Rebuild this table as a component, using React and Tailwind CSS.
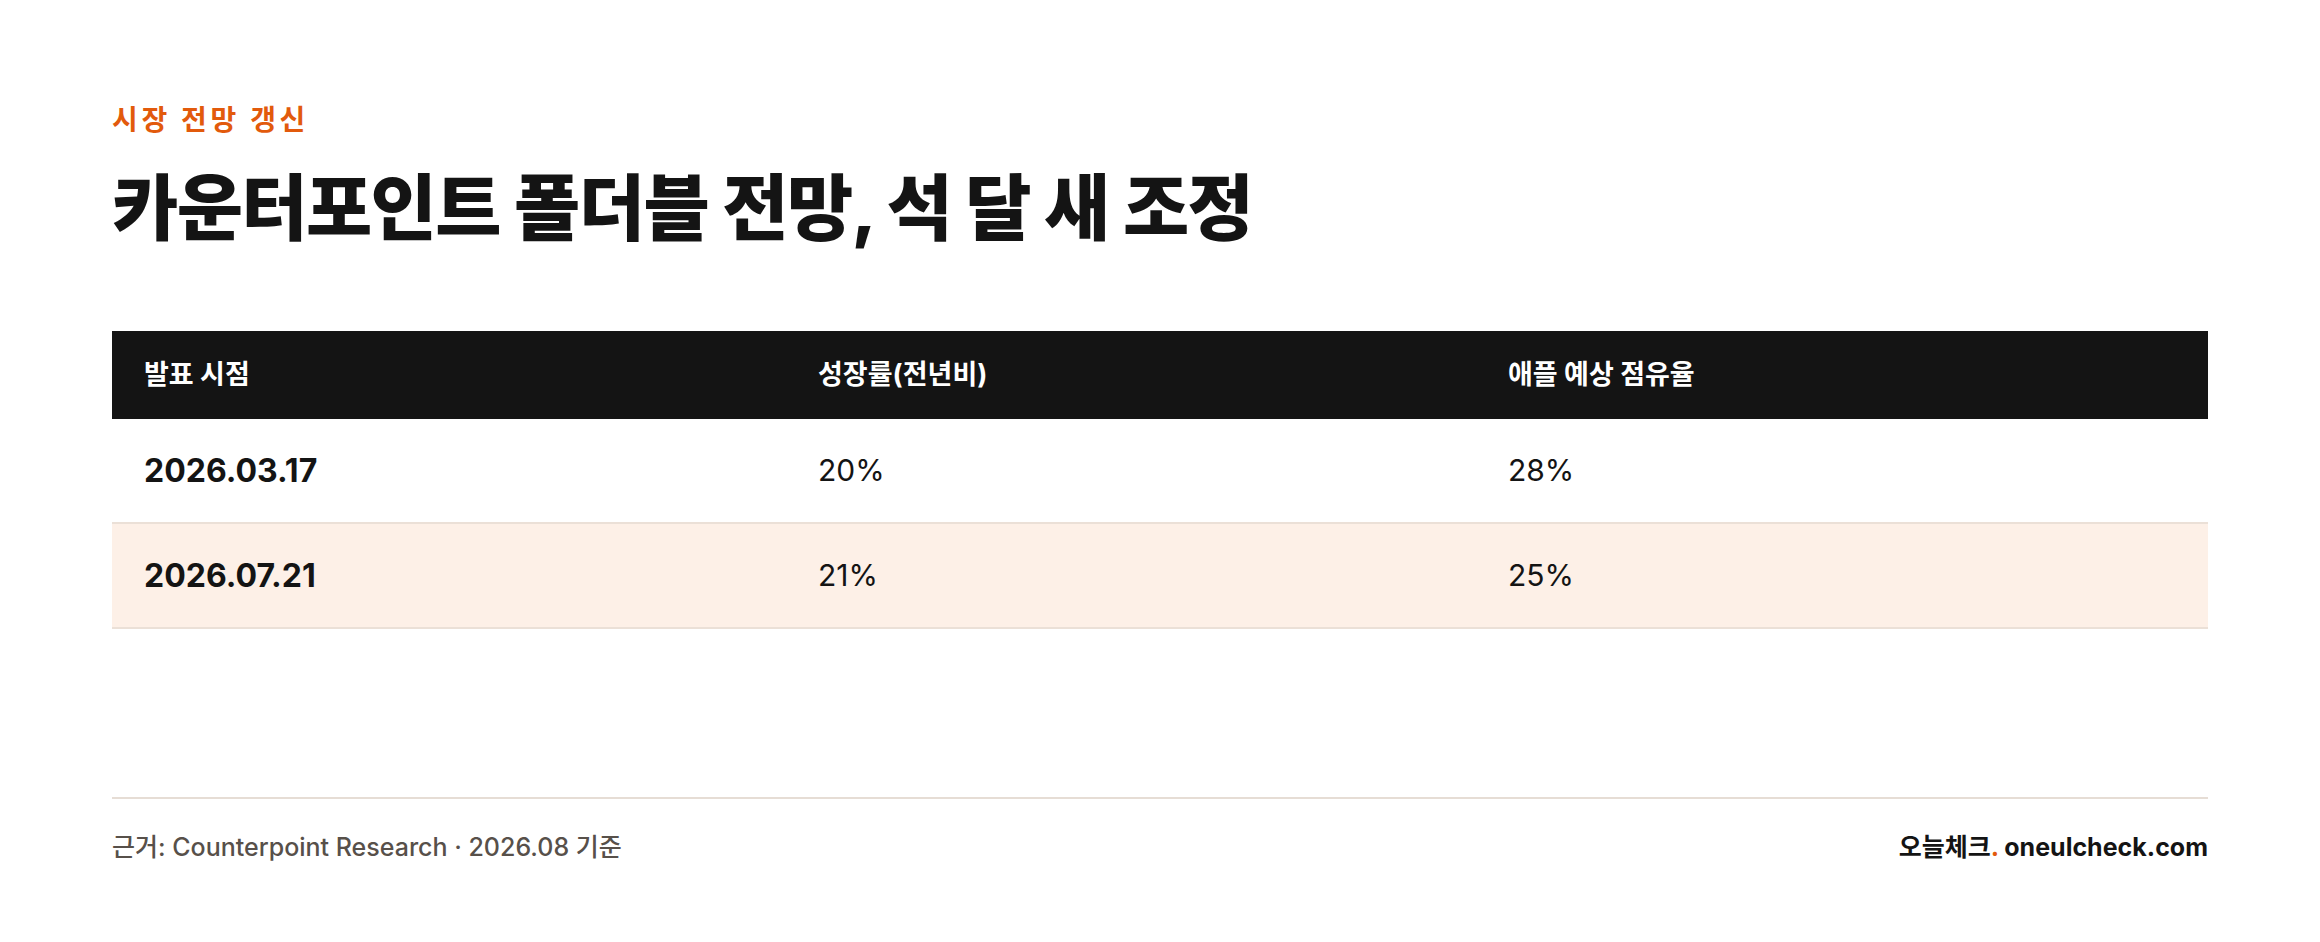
import React from "react";

const rows = [
	{ date: "2026.03.17", growth: "20%", share: "28%" },
	{ date: "2026.07.21", growth: "21%", share: "25%" },
];

const App = () => {
	return (
		<div
			className="w-[2320px] h-[942px] bg-white px-[112px] pt-[104px] text-[#141414]"
			style={{ fontFamily: '"Inter", "Noto Sans CJK KR", sans-serif' }}
		>
			<p className="text-[28px] leading-[33px] font-bold tracking-[0.13em] text-[#e25a0c]">
				시장 전망 갱신
			</p>
			<h1 className="mt-[28px] text-[72px] leading-[86px] font-extrabold tracking-[-0.022em]">
				카운터포인트 폴더블 전망, 석 달 새 조정
			</h1>

			{/* table */}
			<div className="mt-[80px] w-full">
				<div className="grid grid-cols-[674px_690px_1fr] h-[88px] items-center bg-[#141414] text-white text-[27px] font-bold">
					<div className="px-8">발표 시점</div>
					<div className="px-8">성장률(전년비)</div>
					<div className="px-8">애플 예상 점유율</div>
				</div>
				{rows.map((r, i) => (
					<div
						key={r.date}
						className={
							i % 2 === 1
								? "grid grid-cols-[674px_690px_1fr] h-[105px] items-center border-b-2 border-[#ebe0d7] bg-[#fdf0e7] text-[30px]"
								: "grid grid-cols-[674px_690px_1fr] h-[105px] items-center border-b-2 border-[#ebe0d7] bg-white text-[30px]"
						}
					>
						<div className="px-8 text-[32px] font-bold">{r.date}</div>
						<div className="px-8">{r.growth}</div>
						<div className="px-8">{r.share}</div>
					</div>
				))}
			</div>

			{/* footer */}
			<div className="mt-[168px] border-t-2 border-[#e6ddd5] pt-[34px] flex items-center justify-between">
				<span className="text-[25px] leading-[29px] font-medium text-[#57504a]">
					근거: Counterpoint Research · 2026.08 기준
				</span>
				<span className="text-[25px] leading-[29px] font-bold text-[#141414]">
					오늘체크<span className="text-[#e25a0c]">.</span> oneulcheck.com
				</span>
			</div>
		</div>
	);
};

export default App;
